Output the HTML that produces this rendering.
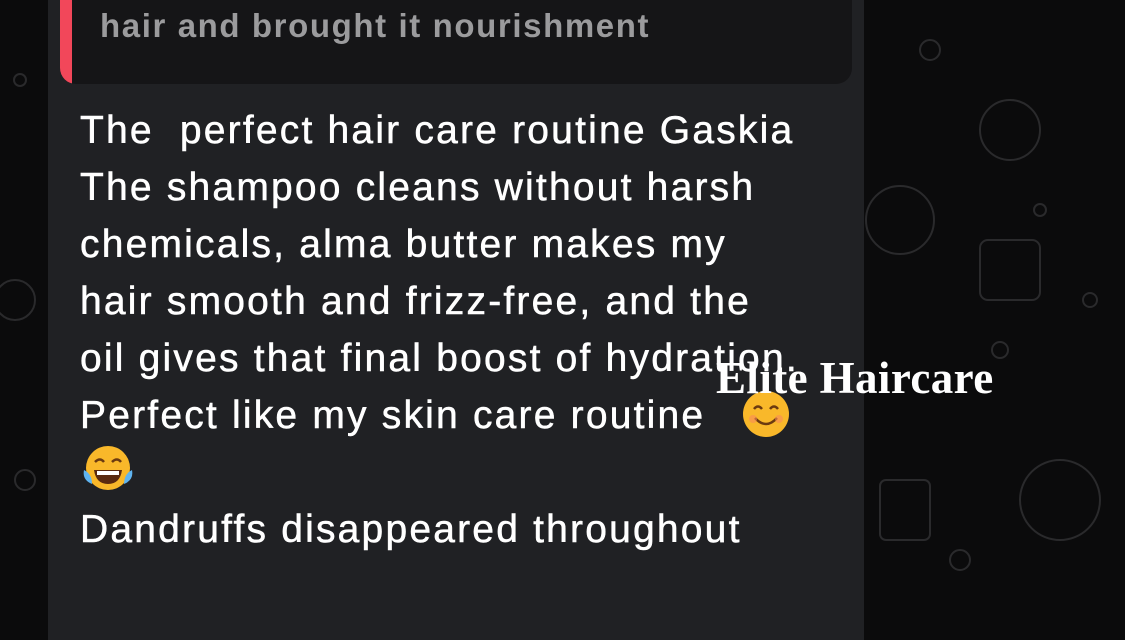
<!DOCTYPE html>
<html><head><meta charset="utf-8"><style>
html,body{margin:0;padding:0;width:1125px;height:614px;overflow:hidden;background:#0b0b0c;font-family:"Liberation Sans","DejaVu Sans",sans-serif}
.bubble{position:absolute;left:48px;top:-20px;width:816px;height:660px;background:#202124}
.quote{position:absolute;left:60px;top:-20px;width:792px;height:104px;background:#151517;border-radius:0 0 16px 16px;overflow:hidden}
.quote .bar{position:absolute;left:0;top:0;width:12px;height:100%;background:#f2475a}
.qt{position:absolute;left:100px;top:7px;font-size:33px;font-weight:bold;color:#9b9b9d;white-space:nowrap;letter-spacing:1.6px}
.txt{position:absolute;left:80px;top:102px;font-size:39px;line-height:57px;color:#fff;white-space:pre;letter-spacing:2.2px;-webkit-text-stroke:0.5px #fff}
.wm{position:absolute;left:716px;top:352px;font-family:"Liberation Serif",serif;font-weight:bold;font-size:45px;color:#fff;white-space:nowrap;letter-spacing:0.4px}
svg{position:absolute;left:0;top:0}
.emo{position:absolute}
</style></head><body>
<svg width="1125" height="614" fill="none" stroke="#2a2a2c" stroke-width="2">
<circle cx="930" cy="50" r="10"/><circle cx="1010" cy="130" r="30"/><circle cx="900" cy="220" r="34"/><circle cx="1040" cy="210" r="6"/><circle cx="1000" cy="350" r="8"/><circle cx="1060" cy="500" r="40"/><circle cx="960" cy="560" r="10"/><circle cx="1090" cy="300" r="7"/><circle cx="20" cy="80" r="6"/><circle cx="15" cy="300" r="20"/><circle cx="25" cy="480" r="10"/>
<rect x="980" y="240" width="60" height="60" rx="8"/><rect x="880" y="480" width="50" height="60" rx="6"/>
</svg>
<div class="bubble"></div>
<div class="quote"><div class="bar"></div></div>
<div class="qt">hair and brought it nourishment</div>
<div class="txt">The  perfect hair care routine Gaskia
The shampoo cleans without harsh
chemicals, alma butter makes my
hair smooth and frizz-free, and the
oil gives that final boost of hydration.
Perfect like my skin care routine
 
Dandruffs disappeared throughout</div>
<svg class="emo" style="left:741px;top:389px" width="50" height="50">
<circle cx="25" cy="25" r="23" fill="#f9b82a"/>
<path d="M13 20 q4-5 8 0 M29 20 q4-5 8 0" stroke="#6b3a10" stroke-width="2.5" fill="none"/>
<path d="M14 29 q11 12 22 0" stroke="#6b3a10" stroke-width="2.5" fill="none"/>
<circle cx="12" cy="30" r="4" fill="#f88a5a" opacity=".6"/><circle cx="38" cy="30" r="4" fill="#f88a5a" opacity=".6"/>
</svg>
<svg class="emo" style="left:82px;top:444px" width="52" height="50">
<circle cx="26" cy="24" r="22" fill="#f9b82a"/>
<path d="M13 18 q5-5 9 0 M30 18 q5-5 9 0" stroke="#6b3a10" stroke-width="2.5" fill="none"/>
<path d="M12 26 h28 q-2 14 -14 14 q-12 0 -14 -14z" fill="#5a2a10"/>
<path d="M15 27 h22 v4 h-22z" fill="#fff"/>
<path d="M2 26 q-2 10 8 14 q0-10 -8-14z M50 26 q2 10 -8 14 q0-10 8-14z" fill="#5fb4f0"/>
</svg>
<div class="wm">Elite Haircare</div>
</body></html>
